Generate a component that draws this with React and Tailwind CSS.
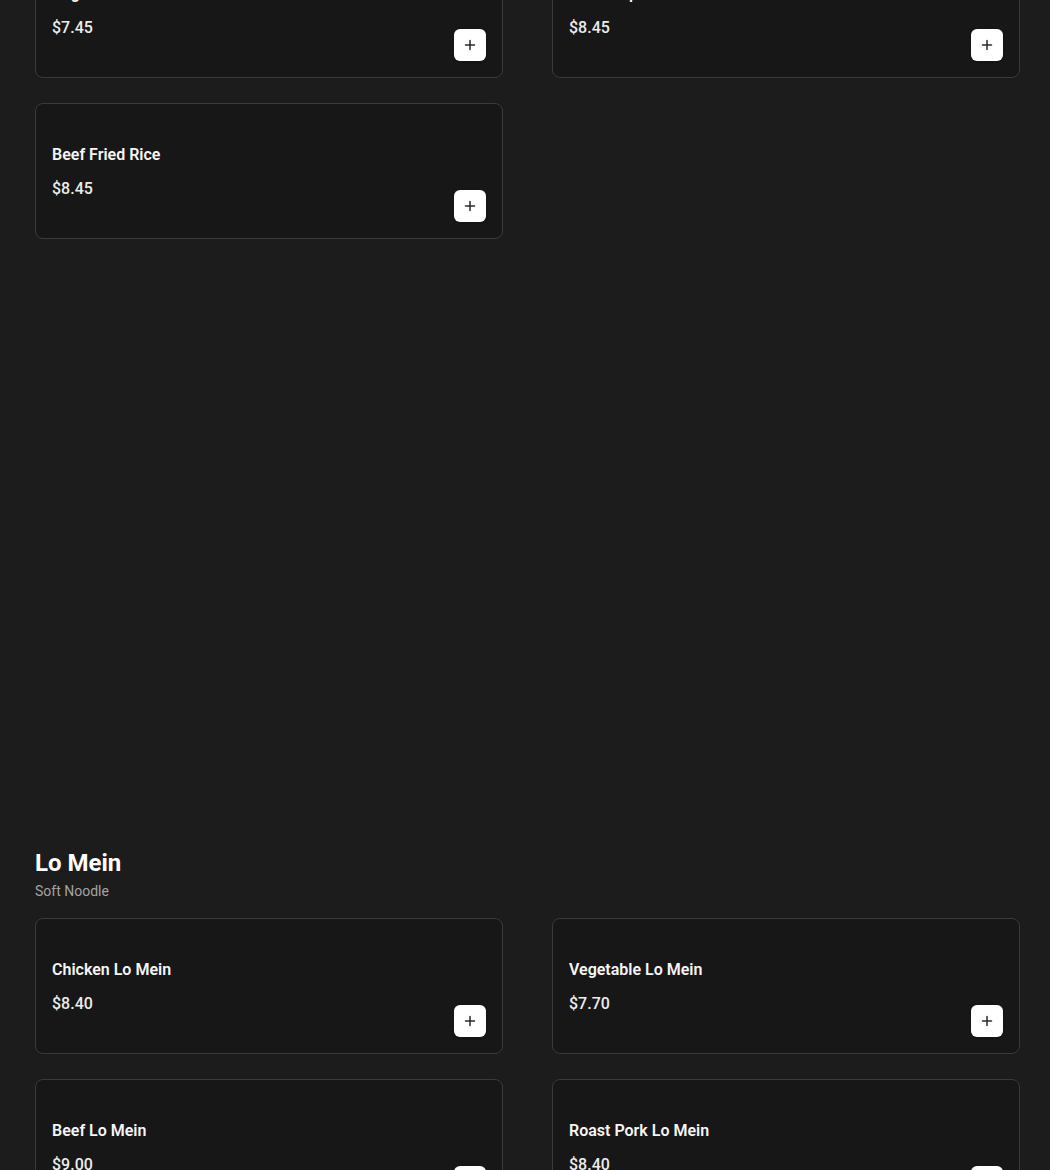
import React from "react";

function PlusIcon() {
  return (
    <svg width="12" height="12" viewBox="0 0 12 12" fill="none">
      <path d="M6 1.5v9M1.5 6h9" stroke="#2a2a2a" strokeWidth="1.5" strokeLinecap="round" />
    </svg>
  );
}

function Card({ name, price }) {
  return (
    <div className="h-[136px] rounded-lg border border-[#3a3a3a] bg-[#171717] p-4 flex justify-between">
      <div className="flex flex-col pt-[23px]">
        <div className="text-[16px] leading-[24px] font-semibold text-[#f5f5f5]">{name}</div>
        <div className="mt-[10px] text-[16px] leading-[24px] font-medium text-[#ececec]">{price}</div>
      </div>
      <button className="self-end w-8 h-8 rounded-md bg-white flex items-center justify-center shadow-sm">
        <PlusIcon />
      </button>
    </div>
  );
}

export default function App() {
  const fried = [
    ["Vegetable Fried Rice", "$7.45"],
    ["House Special Fried Rice", "$8.45"],
    ["Beef Fried Rice", "$8.45"],
  ];
  const loMein = [
    ["Chicken Lo Mein", "$8.40"],
    ["Vegetable Lo Mein", "$7.70"],
    ["Beef Lo Mein", "$9.00"],
    ["Roast Pork Lo Mein", "$8.40"],
  ];
  return (
    <div
      className="w-[1050px] h-[1170px] overflow-hidden bg-[#1c1c1c]"
      style={{ fontFamily: "Roboto, 'Liberation Sans', sans-serif" }}
    >
      <div className="pl-[35px] pr-[30px]">
        <div className="-mt-[58px] grid grid-cols-2 gap-x-[49px] gap-y-[25px]">
          {fried.map(([n, p]) => (
            <Card key={n} name={n} price={p} />
          ))}
        </div>
        <div className="mt-[608px]">
          <h2 className="text-[24px] leading-[32px] font-bold text-white">Lo Mein</h2>
          <p className="mt-[2px] text-[14px] leading-[20px] text-[#a3a3a3]">Soft Noodle</p>
        </div>
        <div className="mt-[17px] grid grid-cols-2 gap-x-[49px] gap-y-[25px]">
          {loMein.map(([n, p]) => (
            <Card key={n} name={n} price={p} />
          ))}
        </div>
      </div>
    </div>
  );
}
